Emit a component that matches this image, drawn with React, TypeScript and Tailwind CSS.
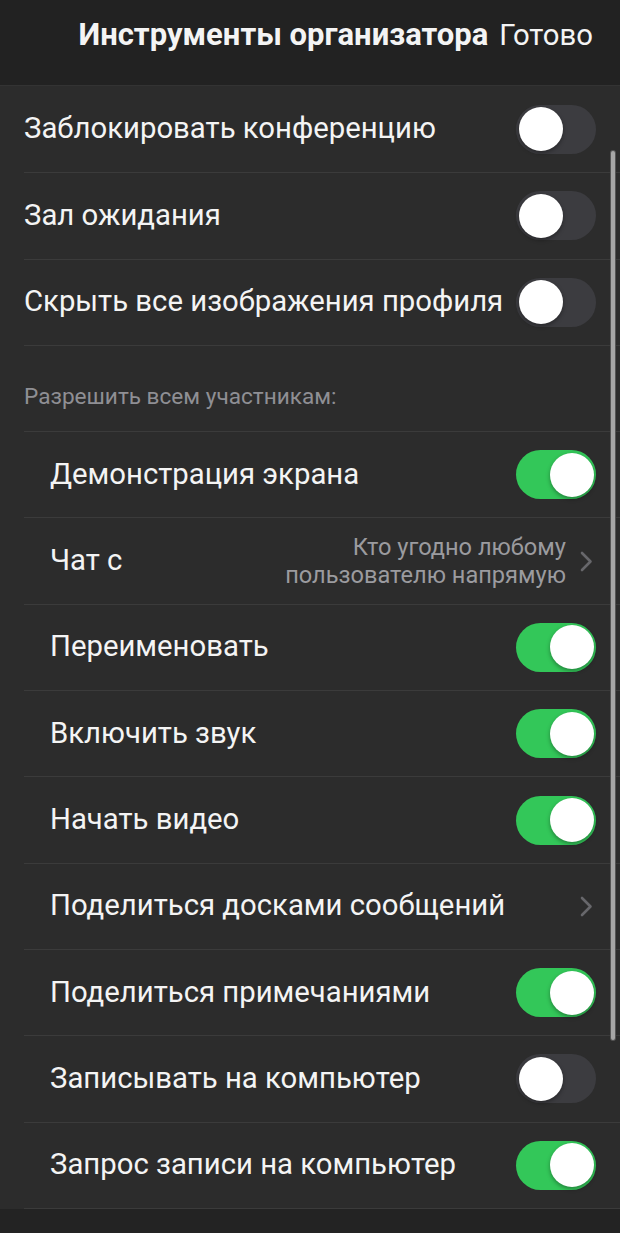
import React from "react";

const font = { fontFamily: "Roboto, 'Noto Sans', sans-serif" };

function Toggle({ on }: { on: boolean }) {
  return (
    <div
      className={
        "relative w-[80px] h-[49px] rounded-full shrink-0 " +
        (on ? "bg-[#33c759]" : "bg-[#3c3c40]")
      }
    >
      <div
        className={
          "absolute top-[2.5px] w-[44px] h-[44px] rounded-full bg-white shadow-[0_2px_4px_rgba(0,0,0,0.35)] " +
          (on ? "left-[33.5px]" : "left-[2.5px]")
        }
      />
    </div>
  );
}

function Chevron() {
  return (
    <svg width="13" height="21" viewBox="0 0 13 21" className="shrink-0">
      <path d="M2 2 L10.5 10.5 L2 19" fill="none" stroke="#67676b" strokeWidth="2.6" strokeLinecap="round" strokeLinejoin="round" />
    </svg>
  );
}

type Row =
  | { kind: "toggle"; label: string; on: boolean; indent?: boolean }
  | { kind: "section"; label: string }
  | { kind: "nav"; label: string; value?: string[]; indent?: boolean };

const rows: Row[] = [
  { kind: "toggle", label: "Заблокировать конференцию", on: false },
  { kind: "toggle", label: "Зал ожидания", on: false },
  { kind: "toggle", label: "Скрыть все изображения профиля", on: false },
  { kind: "section", label: "Разрешить всем участникам:" },
  { kind: "toggle", label: "Демонстрация экрана", on: true, indent: true },
  { kind: "nav", label: "Чат с", value: ["Кто угодно любому", "пользователю напрямую"], indent: true },
  { kind: "toggle", label: "Переименовать", on: true, indent: true },
  { kind: "toggle", label: "Включить звук", on: true, indent: true },
  { kind: "toggle", label: "Начать видео", on: true, indent: true },
  { kind: "nav", label: "Поделиться досками сообщений", indent: true },
  { kind: "toggle", label: "Поделиться примечаниями", on: true, indent: true },
  { kind: "toggle", label: "Записывать на компьютер", on: false, indent: true },
  { kind: "toggle", label: "Запрос записи на компьютер", on: true, indent: true },
];

export default function App() {
  return (
    <div className="relative w-[620px] h-[1233px] bg-[#232323] overflow-hidden text-[#f4f4f4]" style={font}>
      <div className="h-[86px] bg-[#222222] border-b border-[#333333] flex justify-end items-start pt-[16px] pr-[27px] gap-[11px]">
        <span className="text-[31px] leading-[38px] font-bold">Инструменты организатора</span>
        <span className="text-[29.3px] leading-[38px]">Готово</span>
      </div>
      <div className="bg-[#2c2c2c]">
        {rows.map((r, i) => {
          if (r.kind === "section") {
            return (
              <div key={i} className="h-[86.3px] ml-[24px] border-t border-[#3b3b3b] pr-[13px] flex items-center pt-[16px]">
                <span className="text-[22.6px] text-[#8f8f94]">{r.label}</span>
              </div>
            );
          }
          return (
            <div
              key={i}
              className={"h-[86.3px] ml-[24px] flex items-center pr-[24px] " + (i === 0 ? "" : "border-t border-[#3b3b3b]")}
            >
              <span className={"flex-1 text-[29.3px] " + (r.indent ? "pl-[26px]" : "")}>{r.label}</span>
              {r.kind === "toggle" ? (
                <Toggle on={r.on} />
              ) : (
                <div className="flex items-center gap-[14px] pr-[3px]">
                  {r.value && (
                    <div className="text-right text-[23.6px] leading-[28px] text-[#9b9b9f]">
                      {r.value.map((v, j) => (
                        <div key={j}>{v}</div>
                      ))}
                    </div>
                  )}
                  <Chevron />
                </div>
              )}
            </div>
          );
        })}
        <div className="ml-[24px] border-t border-[#3b3b3b]" />
      </div>
      <div className="absolute left-[611px] top-[151px] w-[4px] h-[889px] rounded-full bg-[#a6a6a6] ring-1 ring-[#555]" />
    </div>
  );
}
